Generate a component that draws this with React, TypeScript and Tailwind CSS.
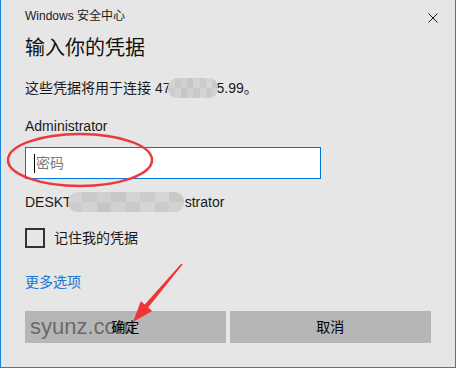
const FONT = "font-['Liberation_Sans','Noto_Sans_CJK_SC',sans-serif]";

const CELLS = [
  '#d4d4d4', '#c9c9c9', '#cfcfcf', '#c6c6c6', '#d2d2d2', '#cbcbcb', '#d6d6d6', '#c8c8c8',
  '#cccccc', '#d3d3d3', '#c5c5c5', '#d0d0d0', '#c9c9c9', '#d5d5d5', '#cacaca', '#d1d1d1',
];

function Mosaic({ className }: { className: string }) {
  return (
    <span className={`grid shrink-0 grid-cols-8 overflow-hidden rounded-[9px] opacity-95 ${className}`}>
      {CELLS.map((c, i) => (
        <span key={i} style={{ backgroundColor: c }} />
      ))}
    </span>
  );
}

export default function App() {
  return (
    <div
      className={`relative flex h-[368px] w-[456px] flex-col border-x border-b border-[#1883d7] bg-[#e6e6e6] px-[24px] text-[14px] leading-[20px] text-[#1a1a1a] ${FONT}`}
    >
      {/* title bar */}
      <div className="flex items-center justify-between pt-[8px]">
        <div className="text-[12px] leading-[16px] text-[#1a1a1a]">Windows 安全中心</div>
        <svg viewBox="0 0 10 10" className="mr-[-7px] mt-[3px] h-[10px] w-[10px]">
          <path d="M0.5 0.5l9 9M9.5 0.5l-9 9" stroke="#1a1a1a" strokeWidth="1" />
        </svg>
      </div>

      <h1 className="mt-[10px] text-[20px] leading-[28px] font-normal text-[#111]">输入你的凭据</h1>

      <div className="mt-[16px] flex h-[20px] items-center whitespace-pre">
        <span>这些凭据将用于连接 47</span>
        <Mosaic className="mx-[-2px] h-[20px] w-[50px]" />
        <span>5.99。</span>
      </div>

      <div className="mt-[18px]">Administrator</div>

      <div className="mt-[11px] flex h-[32px] w-[296px] items-center border border-[#0078d7] bg-white pl-[8px]">
        <span className="h-[19px] w-px bg-black" />
        <span className="ml-px text-[#7a7a7a]">密码</span>
      </div>

      <div className="mt-[13px] flex h-[20px] items-center whitespace-pre">
        <span>DESKT</span>
        <Mosaic className="ml-[-4px] mr-[1px] h-[20px] w-[116px]" />
        <span>strator</span>
      </div>

      <label className="mt-[16px] flex h-[20px] items-center gap-[9px]">
        <span className="h-[20px] w-[20px] border-2 border-[#333]" />
        <span>记住我的凭据</span>
      </label>

      <div className="mt-[24px] text-[#1c75d2]">更多选项</div>

      <div className="mt-[19px] flex gap-[4px]">
        <button className="relative flex h-[32px] w-[201px] items-center justify-center bg-[#b6b6b6] text-black">
          <span className="absolute left-[5px] top-[1px] text-[22px] leading-[30px] text-[#6a6a6a]">
            syunz.com
          </span>
          <span className="relative">确定</span>
        </button>
        <button className="flex h-[32px] w-[202px] items-center justify-center bg-[#b6b6b6] text-black">
          取消
        </button>
      </div>

      {/* annotations */}
      <svg className="pointer-events-none absolute left-0 top-0" width="456" height="368">
        <ellipse cx="79" cy="160" rx="72" ry="26" fill="none" stroke="#ea3a3f" strokeWidth="2.5" />
        <polygon
          points="181.6,264.4 147.2,307.6 151.2,311 132,322 139.8,301.2 143.8,304.4 180.4,263.6"
          fill="#f0343a"
        />
      </svg>
    </div>
  );
}
